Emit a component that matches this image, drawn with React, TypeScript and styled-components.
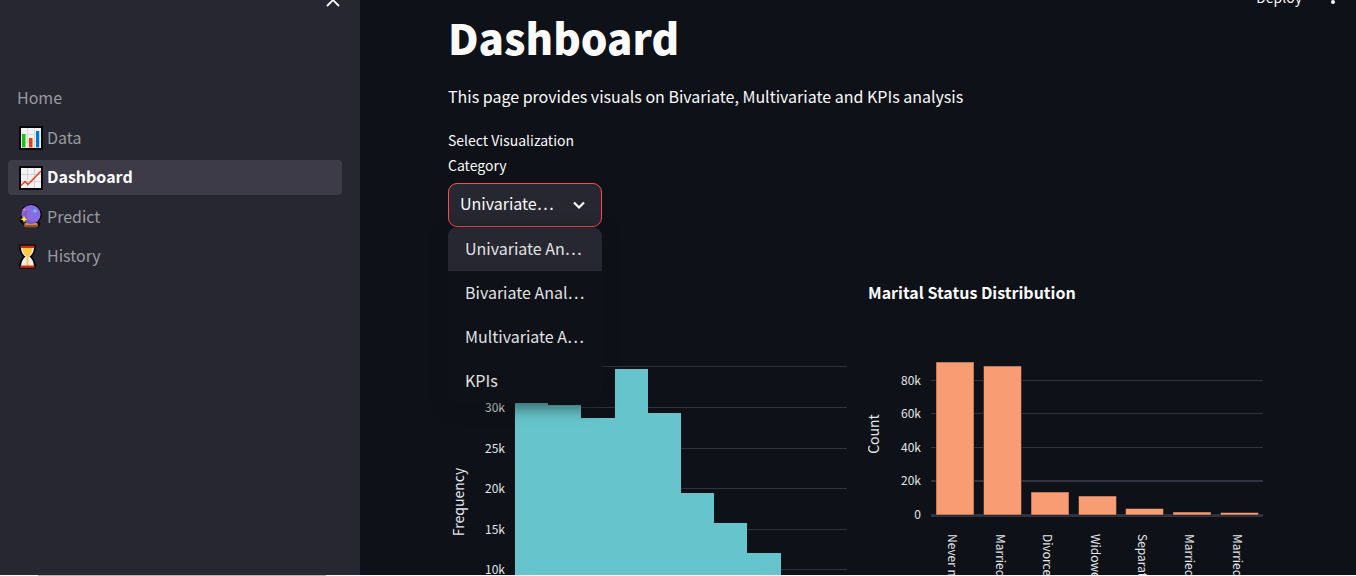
import React from "react";
import styled, { createGlobalStyle } from "styled-components";

const GlobalStyle = createGlobalStyle`
  *, *::before, *::after { box-sizing: border-box; }
  body {
    margin: 0;
    overflow: hidden;
    background: #0e1117;
    color: #fafafa;
    font-family: "Noto Sans CJK SC", "Noto Sans", sans-serif;
    font-size: 16px;
  }
  button, select { font-family: inherit; }
`;

const Page = styled.div`
  display: grid;
  grid-template-columns: 360px minmax(0, 1fr);
  grid-template-rows: minmax(0, 1fr) 1px;
  height: 100vh;
`;

const Sidebar = styled.aside`
  background: #262730;
  overflow: hidden;
`;

const SidebarTop = styled.div`
  display: flex;
  justify-content: flex-end;
  height: 81px;
  padding-right: 18px;
`;

const IconButton = styled.button`
  display: flex;
  width: 18px;
  height: 18px;
  margin-top: -8px;
  padding: 0;
  border: 0;
  background: none;
  color: #fafafa;
`;

const NavList = styled.ul`
  display: flex;
  flex-direction: column;
  justify-content: space-between;
  height: 193px;
  margin: 0;
  padding: 0 18px 0 8px;
  list-style: none;
`;

const NavLink = styled.a<{ $active?: boolean }>`
  display: flex;
  align-items: center;
  gap: 4px;
  height: 35px;
  padding: 0 0 2px 9px;
  border-radius: 4px;
  background: ${(p) => (p.$active ? "#3c3b47" : "transparent")};
  color: ${(p) => (p.$active ? "#fafafa" : "#9a9aa0")};
  font-weight: ${(p) => (p.$active ? 700 : 400)};
  line-height: 23px;
  text-decoration: none;

  svg { flex: none; }
`;

const Main = styled.main`
  overflow: hidden;
`;

const Toolbar = styled.header`
  display: flex;
  justify-content: flex-end;
  gap: 18px;
  height: 9px;
  padding-right: 18px;
`;

const DeployButton = styled.button`
  height: 20px;
  margin-top: -13px;
  padding: 0;
  border: 0;
  background: none;
  color: #fafafa;
  font-size: 14px;
  line-height: 20px;
`;

const Content = styled.div`
  padding: 0 88px;
`;

const Title = styled.h1`
  margin: 0;
  font-size: 42px;
  font-weight: 900;
  line-height: 56px;
`;

const Intro = styled.p`
  margin: 19px 0 20px;
  line-height: 24px;
`;

const Controls = styled.div`
  display: grid;
  grid-template-columns: repeat(5, minmax(0, 1fr));
  gap: 12px;
`;

const Field = styled.div`
  position: relative;
`;

const FieldLabel = styled.label`
  display: block;
  margin-bottom: 5px;
  font-size: 14px;
  line-height: 25px;
`;

const SelectBox = styled.div`
  display: grid;
  height: 44px;
  border: 1px solid #ff4b4b;
  border-radius: 9px;
  background: #262730;

  > * { grid-area: 1 / 1; }
  svg { align-self: center; justify-self: end; margin-right: 13px; pointer-events: none; }
`;

const Select = styled.select`
  width: 100%;
  height: 38px;
  padding: 0 45px 0 11px;
  border: 0;
  outline: 0;
  appearance: none;
  background: transparent;
  color: #fafafa;
  font-size: 16px;
  text-overflow: ellipsis;
  font-feature-settings: "pwid";
`;

const Menu = styled.ul`
  position: absolute;
  z-index: 1;
  top: 100%;
  left: 0;
  right: 0;
  margin: 0;
  padding: 0;
  overflow: hidden;
  border-radius: 9px;
  background: #0e1117;
  box-shadow: 0 4px 16px rgba(14, 16, 18, 0.6);
  list-style: none;
`;

const Option = styled.li<{ $selected?: boolean }>`
  height: 44px;
  padding: 0 17px;
  overflow: hidden;
  background: ${(p) => (p.$selected ? "#262730" : "transparent")};
  color: #e2e2e3;
  line-height: 42px;
  text-overflow: ellipsis;
  white-space: nowrap;
  font-feature-settings: "pwid";
`;

const Charts = styled.div`
  display: grid;
  grid-template-columns: repeat(2, minmax(0, 1fr));
  gap: 20px;
  margin-top: 43px;
`;

const Chart = styled.svg`
  display: block;
  width: 100%;
  height: auto;
  fill: #e3e5ea;
  font-size: 12px;

  .title { fill: #fafafa; font-size: 16px; font-weight: 700; }
  .axis { font-size: 14px; }
`;

const ScrollTrack = styled.div`
  grid-column: 1 / -1;
  padding-left: 38px;
  background: #f8f8fa;
`;

const ScrollThumb = styled.div`
  width: 288px;
  height: 1px;
  background: #b4b4b8;
`;

const BarsIcon = () => (
  <svg width="26" height="26" viewBox="0 0 26 26" aria-hidden="true">
    <path d="M2 2h24v24H2z" fill="#08080a" />
    <path d="M4 4h20v20H4z" fill="#f2f2f4" />
    <path d="M4 10.500h20M4 17.500h20M10.500 4v20M17.500 4v20" stroke="#d9d9dc" />
    <path d="M5 10h3.500v13.500H5z" fill="#16c60c" />
    <path d="M12 14h3.500v9.500H12z" fill="#f03a17" />
    <path d="M19 7h3.200v16.500H19z" fill="#0078d7" />
  </svg>
);

const TrendIcon = () => (
  <svg width="26" height="26" viewBox="0 0 26 26" aria-hidden="true">
    <path d="M2 2h24v24H2z" fill="#08080a" />
    <path d="M4 4h20v20H4z" fill="#f2f2f4" />
    <path d="M4 10.500h20M4 17.500h20M10.500 4v20M17.500 4v20" stroke="#d2d2d5" />
    <path d="M4 21.500l4-4 3 3L24 7" fill="none" stroke="#f03a17" strokeWidth="1.500" />
  </svg>
);

const CrystalIcon = () => (
  <svg width="26" height="26" viewBox="0 0 26 26" aria-hidden="true">
    <path d="M14 1a10.500 10.500 0 0 1 8 17.500q2 1 1 4-1 2.500-4 2.500h-9q-4 0-4-4-4-1-3-6 1-2 2-3V5q1-2 3-1 3-3 6-3z" fill="#0b090d" />
    <path d="M7.500 20h13l1 3q-1 1.500-3 1.500h-9q-2 0-3-1.500z" fill="#8e562e" />
    <path d="M8 20h12v2H8z" fill="#c69069" />
    <circle cx="14" cy="11.500" r="9.500" fill="#886ce4" />
    <path d="M5 14a9.500 9.500 0 0 0 16 4q-7 2-10-3-2-4 0-8-5 2-6 7z" fill="#744da9" opacity=".5" />
    <path d="M18 5.500l.7 1.800 1.800.7-1.800.7L18 10.500l-.7-1.800-1.800-.7 1.800-.7z" fill="#61d6ff" />
    <path d="M7 12.500l1 2.700 2.700 1-2.700 1-1 2.800-1-2.800-2.700-1 2.700-1z" fill="#fff100" />
    <path d="M7 4.500l.6 1.400 1.400.6-1.400.6L7 8.500l-.6-1.400L5 6.500l1.400-.6z" fill="#ef83a8" />
  </svg>
);

const HourglassIcon = () => (
  <svg width="26" height="26" viewBox="0 0 26 26" aria-hidden="true">
    <path d="M3 1.500h15q1.500 1 1 3.500-1 6-4 8.500 3 3 4 8 .5 3-1 4H3q-1.500-1-1-4 1-5 4-8-3-2.500-4-8.500-.5-2.500 1-3.500z" fill="#08080a" />
    <path d="M4 5h13q-.5 6-4.500 8.500Q16.500 17 17 23H4q.5-6 4.500-9.500Q4.500 11 4 5z" fill="#eeeef0" />
    <path d="M5.500 5h10q0 5-4 8.500V23h-2v-9.500q-4-3.500-4-8.500z" fill="#ffc83d" />
    <path d="M3.500 2.700h14V5h-14zM3.500 22.500h14v2.300h-14z" fill="#d62c12" />
  </svg>
);

const pages = [
  { name: "Home" },
  { name: "Data", Icon: BarsIcon },
  { name: "Dashboard", Icon: TrendIcon, active: true },
  { name: "Predict", Icon: CrystalIcon },
  { name: "History", Icon: HourglassIcon },
];

const categories = [
  "Univariate Analysis",
  "Bivariate Analysis",
  "Multivariate Analysis",
  "KPIs",
];

const frequencyTicks = [
  { y: 96, label: "" },
  { y: 137, label: "30k" },
  { y: 178, label: "25k" },
  { y: 218, label: "20k" },
  { y: 259, label: "15k" },
  { y: 299, label: "10k" },
];

const frequencyBars = [
  [67, 128, 33], [100, 135, 33], [133, 148, 34], [167, 99, 33],
  [200, 143, 33], [233, 223, 33], [266, 253, 33], [299, 283, 34],
];

const countTicks = [
  { y: 110, label: "80k" },
  { y: 143, label: "60k" },
  { y: 177, label: "40k" },
  { y: 210, label: "20k" },
  { y: 244, label: "0" },
];

const maritalBars = [
  { x: 68, top: 92, label: "Never married" },
  { x: 115.5, top: 96, label: "Married-civilian" },
  { x: 163, top: 222, label: "Divorced" },
  { x: 210.500, top: 226, label: "Widowed" },
  { x: 257.5, top: 238.5, label: "Separated" },
  { x: 305, top: 242, label: "Married-absent" },
  { x: 352.5, top: 242.5, label: "Married-AF" },
];

const FrequencyChart = () => (
  <Chart viewBox="0 0 400 420" role="img" aria-label="Frequency">
    {frequencyTicks.map((t) => (
      <g key={t.y}>
        <rect x="67" y={t.y} width="332" height="1" fill="#31333f" />
        <text x="57" y={t.y + 5} textAnchor="end">{t.label}</text>
      </g>
    ))}
    {frequencyBars.map(([x, y, w]) => (
      <rect key={x} x={x} y={y} width={w} height={400 - y} fill="#66c5cc" />
    ))}
    <text className="axis" transform="translate(16 232) rotate(-90)" textAnchor="middle">Frequency</text>
  </Chart>
);

const MaritalChart = () => (
  <Chart viewBox="0 0 400 420" role="img" aria-label="Marital Status Distribution">
    <text className="title" x="0" y="29">Marital Status Distribution</text>
    {countTicks.map((t) => (
      <g key={t.y}>
        <rect x="63" y={t.y} width="332" height={t.y === 244 ? 3 : t.y === 210 ? 2 : 1} fill="#31333f" />
        <text x="53" y={t.y + 5} textAnchor="end">{t.label}</text>
      </g>
    ))}
    {maritalBars.map((b) => (
      <g key={b.label}>
        <rect x={b.x} y={b.top} width="38" height={245 - b.top} fill="#f89c74" stroke="#0e1117" strokeOpacity=".5" strokeWidth="1" />
        <text transform={`translate(${b.x + 12} 264) rotate(90)`}>{b.label}</text>
      </g>
    ))}
    <text className="axis" transform="translate(11 164) rotate(-90)" textAnchor="middle">Count</text>
  </Chart>
);

export default function App() {
  return (
    <Page>
      <GlobalStyle />
      <Sidebar>
        <SidebarTop>
          <IconButton aria-label="Close sidebar">
            <svg width="18" height="18" viewBox="0 0 18 18" fill="none" stroke="currentColor" strokeWidth="1.800">
              <path d="M3 2l12 12M15 2L3 14" />
            </svg>
          </IconButton>
        </SidebarTop>
        <nav>
          <NavList>
            {pages.map(({ name, Icon, active }) => (
              <li key={name}>
                <NavLink href="#" $active={active} aria-current={active ? "page" : undefined}>
                  {Icon && <Icon />}
                  {name}
                </NavLink>
              </li>
            ))}
          </NavList>
        </nav>
      </Sidebar>
      <Main>
        <Toolbar>
          <DeployButton>Deploy</DeployButton>
          <IconButton aria-label="Menu">
            <svg width="18" height="18" viewBox="0 0 18 18" fill="currentColor">
              <circle cx="13" cy="-1" r="2" />
              <circle cx="13" cy="4" r="2" />
              <circle cx="13" cy="10" r="2" />
            </svg>
          </IconButton>
        </Toolbar>
        <Content>
          <Title>Dashboard</Title>
          <Intro>This page provides visuals on Bivariate, Multivariate and KPIs analysis</Intro>
          <Controls>
            <Field>
              <FieldLabel htmlFor="category">Select Visualization Category</FieldLabel>
              <SelectBox>
                <Select id="category" defaultValue={categories[0]}>
                  {categories.map((c) => <option key={c}>{c}</option>)}
                </Select>
                <svg width="18" height="18" viewBox="0 0 18 18" fill="none" stroke="#fafafa" strokeWidth="2.200" aria-hidden="true">
                  <path d="M4 6.500l5 5 5-5" />
                </svg>
              </SelectBox>
              <Menu role="listbox" aria-label="Category">
                {categories.map((c, i) => (
                  <Option key={c} role="option" aria-selected={i === 0} $selected={i === 0}>{c}</Option>
                ))}
              </Menu>
            </Field>
          </Controls>
          <Charts>
            <FrequencyChart />
            <MaritalChart />
          </Charts>
        </Content>
      </Main>
      <ScrollTrack>
        <ScrollThumb />
      </ScrollTrack>
    </Page>
  );
}
